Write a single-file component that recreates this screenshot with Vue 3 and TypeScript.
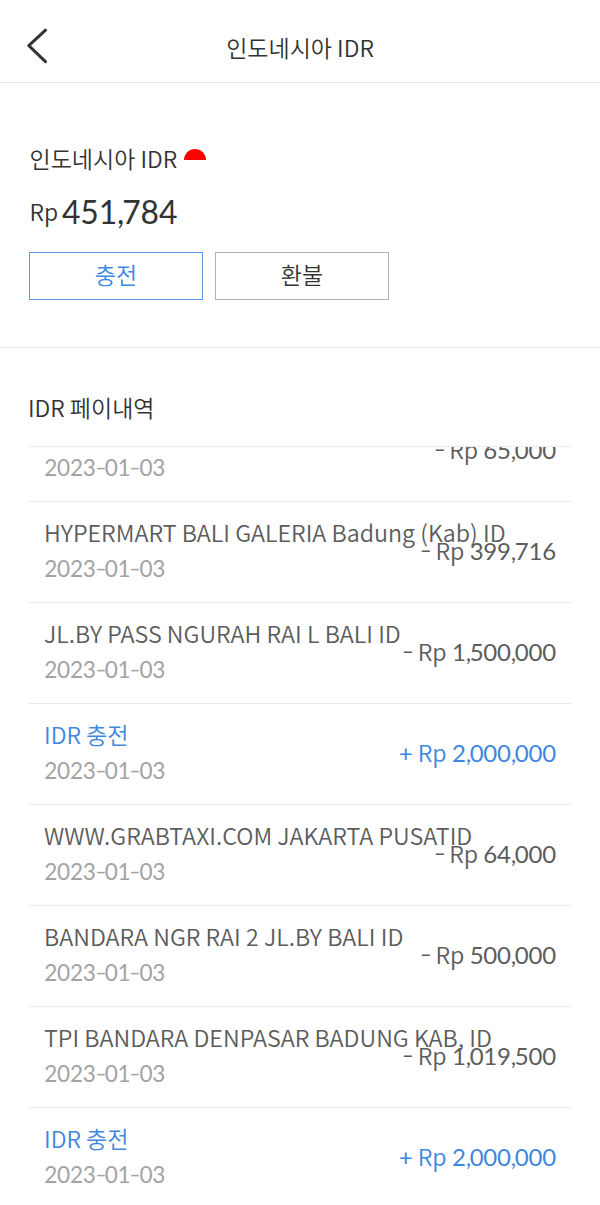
<script setup lang="ts">
interface Entry {
  name?: string
  date: string
  sign: '+' | '-'
  amount: string
}

const entries: Entry[] = [
  { date: '2023-01-03', sign: '-', amount: '65,000' },
  { name: 'HYPERMART BALI GALERIA Badung (Kab) ID', date: '2023-01-03', sign: '-', amount: '399,716' },
  { name: 'JL.BY PASS NGURAH RAI L BALI ID', date: '2023-01-03', sign: '-', amount: '1,500,000' },
  { name: 'IDR 충전', date: '2023-01-03', sign: '+', amount: '2,000,000' },
  { name: 'WWW.GRABTAXI.COM JAKARTA PUSATID', date: '2023-01-03', sign: '-', amount: '64,000' },
  { name: 'BANDARA NGR RAI 2 JL.BY BALI ID', date: '2023-01-03', sign: '-', amount: '500,000' },
  { name: 'TPI BANDARA DENPASAR BADUNG KAB, ID', date: '2023-01-03', sign: '-', amount: '1,019,500' },
  { name: 'IDR 충전', date: '2023-01-03', sign: '+', amount: '2,000,000' },
]

// Splits a figure so its punctuation can be spaced separately from the digits.
const parts = (text: string): string[] => text.split(/([,-])/)

const partClass = (part: string) => ({ comma: part === ',', dash: part === '-' })
</script>

<template>
  <div class="screen">
    <header class="bar">
      <svg class="back" width="24" height="38" viewBox="0 0 24 38">
        <path d="M20.5 3.2 L3.8 18.7 L20.5 34.7" fill="none" stroke="#333" stroke-width="3" stroke-linecap="round" stroke-linejoin="round" />
      </svg>
      <h1 class="title">인도네시아 IDR</h1>
    </header>

    <section class="wallet">
      <div class="currency">
        <span>인도네시아 IDR</span>
        <svg class="flag" width="22" height="22" viewBox="0 0 22 22">
          <path d="M0 11 A11 11 0 0 1 22 11 Z" fill="#f00" />
        </svg>
      </div>
      <div class="balance">
        <span class="unit">Rp</span>
        <span class="value"><span v-for="(p, k) in parts('451,784')" :key="k" :class="partClass(p)">{{ p }}</span></span>
      </div>
      <div class="actions">
        <button class="btn primary">충전</button>
        <button class="btn">환불</button>
      </div>
    </section>

    <section class="history">
      <h2 class="heading">IDR 페이내역</h2>
      <div class="list">
        <div v-for="(e, i) in entries" :key="i" class="row" :class="{ plus: e.sign === '+' }">
          <div class="info">
            <div class="name">{{ e.name }}</div>
            <div class="date"><span v-for="(p, k) in parts(e.date)" :key="k" :class="partClass(p)">{{ p }}</span></div>
          </div>
          <div class="amount"><span class="num" :class="partClass(e.sign)">{{ e.sign }}</span> Rp <span class="num"><span v-for="(p, k) in parts(e.amount)" :key="k" :class="partClass(p)">{{ p }}</span></span></div>
        </div>
      </div>
    </section>
  </div>
</template>

<style>
body {
  margin: 0;
  background: #fff;
}
</style>

<style scoped>
.screen {
  box-sizing: border-box;
  width: 600px;
  height: 1205px;
  overflow: hidden;
  display: flex;
  flex-direction: column;
  background: #fff;
  color: #333;
  font-family: "Noto Sans CJK KR DemiLight", "Noto Sans CJK KR", "Noto Sans", sans-serif;
  font-size: 23px;
  font-weight: 350;
}
.bar {
  box-sizing: border-box;
  height: 83px;
  flex: none;
  display: grid;
  border-bottom: 1px solid #e6e6e6;
}
.back {
  grid-area: 1 / 1;
  margin: 27px 0 0 25px;
}
.title {
  grid-area: 1 / 1;
  margin: 29px 0 0;
  text-align: center;
  font-size: 23px;
  font-weight: 350;
  line-height: 36px;
}
.wallet {
  box-sizing: border-box;
  height: 265px;
  flex: none;
  padding: 57px 29px 0;
  border-bottom: 1px solid #e6e6e6;
}
.currency {
  display: flex;
  height: 36px;
  padding-left: 0.5px;
  line-height: 36px;
}
.flag {
  margin: 9px 0 0 6.5px;
}
.balance {
  display: flex;
  align-items: flex-start;
  height: 48px;
  margin-top: 11px;
  padding-left: 0.5px;
  line-height: 48px;
}
.value {
  margin: 1px 0 0 4px;
  font-family: Lato, sans-serif;
  font-size: 31.9px;
  font-weight: 400;
  letter-spacing: -0.2px;
}
.actions {
  display: flex;
  gap: 12px;
  margin-top: 17px;
}
.btn {
  box-sizing: border-box;
  width: 174px;
  height: 48px;
  padding: 0 0 4px;
  border: 1px solid #b3b3b3;
  background: #fff;
  color: #333;
  font-family: inherit;
  font-size: 23px;
  font-weight: 350;
  line-height: 42px;
}
.btn.primary {
  border-color: #5b98e2;
  color: #3f87de;
}
.history {
  flex: 1;
  min-height: 0;
  display: flex;
  flex-direction: column;
  padding: 41px 28px 0;
}
.heading {
  margin: 0 0 21px;
  font-size: 23px;
  font-weight: 350;
  line-height: 36px;
}
.list {
  flex: 1;
  min-height: 0;
  overflow: hidden;
  border-top: 1px solid #ebebeb;
}
.row {
  box-sizing: border-box;
  height: 101px;
  display: grid;
  padding: 13px 16px 0;
  border-bottom: 1px solid #ebebeb;
  color: #5c5c5c;
}
.row:first-child {
  margin-top: -46px;
}
.info,
.amount {
  grid-area: 1 / 1;
}
.name {
  height: 36px;
  font-size: 23.27px;
  line-height: 34px;
  white-space: nowrap;
}
.plus .name {
  font-size: 23.1px;
}
.date {
  padding-left: 0.3px;
  color: #a3a3a3;
  font-family: Lato, sans-serif;
  font-size: 22.6px;
  font-weight: 400;
  letter-spacing: -0.3px;
  line-height: 36px;
}
.amount {
  padding-top: 18px;
  text-align: right;
  font-size: 23.3px;
  line-height: 34px;
}
.num {
  font-family: Lato, sans-serif;
  font-size: 24px;
  font-weight: 400;
  letter-spacing: -0.2px;
}
.comma {
  letter-spacing: -0.06em;
}
.dash {
  display: inline-block;
  width: 9.2px;
  line-height: 1;
  text-align: center;
  transform: translateY(-1px) scale(1.35, 0.85);
}
.plus .name,
.plus .amount {
  color: #3f87de;
}
</style>
